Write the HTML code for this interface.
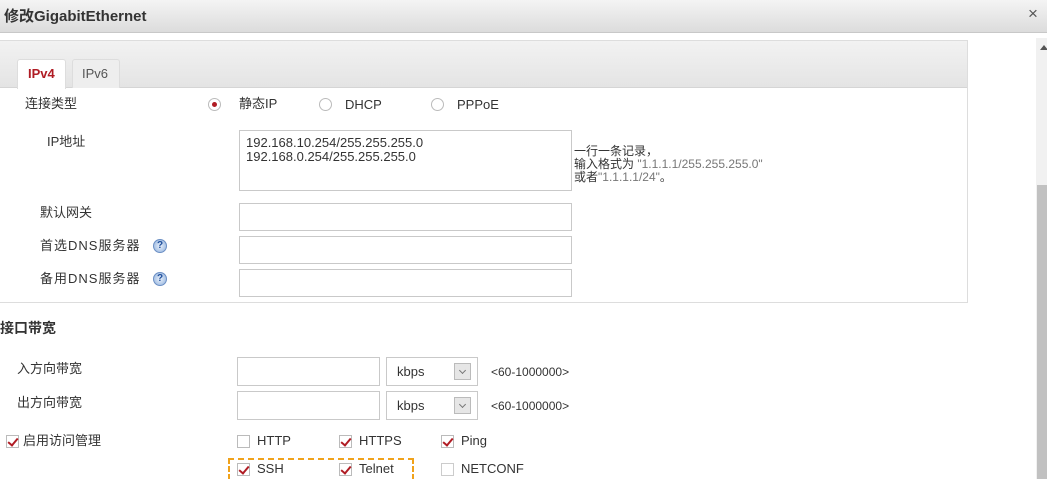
<!DOCTYPE html><html><head><meta charset="utf-8"><style>
*{margin:0;padding:0;box-sizing:border-box}
html,body{width:1047px;height:479px;overflow:hidden}
body{background:#fff;font-family:"Liberation Sans","Noto Sans CJK SC",sans-serif;font-size:13px;color:#333;position:relative;line-height:15px}
.a{position:absolute;white-space:nowrap}
.hdr{left:0;top:0;width:1047px;height:33px;background:linear-gradient(#f4f4f4,#dcdcdc);border-bottom:1px solid #c8c8c8}
.inp{position:absolute;border:1px solid #c9c9c9;background:#fff}
.cb{position:absolute;width:13px;height:13px;border:1px solid #bbb;background:#fff}
.cb.c::after{content:"";position:absolute;left:3px;top:0px;width:4px;height:8px;border:solid #b01c24;border-width:0 2px 2px 0;transform:rotate(40deg)}
.rd{position:absolute;width:13px;height:13px;border:1px solid #bbb;border-radius:50%;background:#fff}
.q{position:absolute;width:14px;height:14px;border-radius:50%;background:radial-gradient(#e8f0fb,#8fb0dc);border:1px solid #6b8fc4;color:#1f4f9c;font-size:10px;font-weight:bold;text-align:center;line-height:12px}
.sel{position:absolute;border:1px solid #c9c9c9;background:#fff}
.sel span{position:absolute;left:10px;top:6px}
.sel i{position:absolute;right:6px;top:5px;width:17px;height:17px;background:#e6e6e6;border:1px solid #bbb}
.sel i::after{content:"";position:absolute;left:5px;top:4px;width:4px;height:4px;border:solid #777;border-width:0 1px 1px 0;transform:rotate(45deg)}
</style></head><body>
<div class="a hdr"></div>
<div class="a" style="left:4px;top:8px;font-size:15px;font-weight:bold;color:#333;line-height:17px">修改GigabitEthernet</div>
<div class="a" style="left:1028px;top:6px;font-size:17px;color:#555">×</div>
<div class="a" style="left:1036px;top:38px;width:11px;height:441px;background:#f1f1f1"></div>
<div class="a" style="left:1037px;top:185px;width:10px;height:294px;background:#c1c1c1"></div>
<div class="a" style="left:1040px;top:45px;width:0;height:0;border-left:4px solid transparent;border-right:4px solid transparent;border-bottom:5px solid #555"></div>
<div class="a" style="left:0;top:40px;width:968px;height:263px;border:1px solid #ddd;border-left:none"></div>
<div class="a" style="left:0;top:41px;width:967px;height:47px;background:linear-gradient(#f2f2f2,#e4e4e4);border-bottom:1px solid #d5d5d5"></div>
<div class="a" style="left:17px;top:59px;width:49px;height:30px;background:#fff;border:1px solid #ddd;border-bottom:none;border-radius:3px 3px 0 0"></div>
<div class="a" style="left:28px;top:66px;color:#b01c24;font-weight:bold">IPv4</div>
<div class="a" style="left:72px;top:59px;width:48px;height:29px;background:#eee;border:1px solid #ddd;border-bottom:none;border-radius:3px 3px 0 0"></div>
<div class="a" style="left:82px;top:66px;color:#555">IPv6</div>
<div class="a" style="left:25px;top:96px">连接类型</div>
<div class="rd" style="left:208px;top:98px"></div><div class="a" style="left:212px;top:102px;width:5px;height:5px;border-radius:50%;background:#b01c24"></div>
<div class="a" style="left:239px;top:96px">静态IP</div>
<div class="rd" style="left:319px;top:98px"></div><div class="a" style="left:345px;top:97px">DHCP</div>
<div class="rd" style="left:431px;top:98px"></div><div class="a" style="left:457px;top:97px">PPPoE</div>
<div class="a" style="left:47px;top:134px">IP地址</div>
<div class="inp" style="left:239px;top:130px;width:333px;height:61px"></div>
<div class="a" style="left:246px;top:136px;line-height:14px">192.168.10.254/255.255.255.0<br>192.168.0.254/255.255.255.0</div>
<div class="a" style="left:574px;top:145px;line-height:13px;font-size:12px">一行一条记录，<br>输入格式为 <span style="color:#777">"1.1.1.1/255.255.255.0"</span><br>或者<span style="color:#777">"1.1.1.1/24"</span>。</div>
<div class="a" style="left:40px;top:205px">默认网关</div>
<div class="inp" style="left:239px;top:203px;width:333px;height:28px"></div>
<div class="a" style="left:40px;top:238px;letter-spacing:1px">首选DNS服务器</div><div class="q" style="left:153px;top:239px">?</div>
<div class="inp" style="left:239px;top:236px;width:333px;height:28px"></div>
<div class="a" style="left:40px;top:271px;letter-spacing:1px">备用DNS服务器</div><div class="q" style="left:153px;top:272px">?</div>
<div class="inp" style="left:239px;top:269px;width:333px;height:28px"></div>
<div class="a" style="left:0;top:321px;font-weight:bold;font-size:14px">接口带宽</div>
<div class="a" style="left:17px;top:361px">入方向带宽</div>
<div class="inp" style="left:237px;top:357px;width:143px;height:29px"></div>
<div class="sel" style="left:386px;top:357px;width:92px;height:29px"><span>kbps</span><i></i></div>
<div class="a" style="left:491px;top:365px;font-size:12px">&lt;60-1000000&gt;</div>
<div class="a" style="left:17px;top:395px">出方向带宽</div>
<div class="inp" style="left:237px;top:391px;width:143px;height:29px"></div>
<div class="sel" style="left:386px;top:391px;width:92px;height:29px"><span>kbps</span><i></i></div>
<div class="a" style="left:491px;top:399px;font-size:12px">&lt;60-1000000&gt;</div>
<div class="cb c" style="left:6px;top:435px"></div><div class="a" style="left:23px;top:433px">启用访问管理</div>
<div class="cb" style="left:237px;top:435px"></div><div class="a" style="left:257px;top:433px">HTTP</div>
<div class="cb c" style="left:339px;top:435px"></div><div class="a" style="left:359px;top:433px">HTTPS</div>
<div class="cb c" style="left:441px;top:435px"></div><div class="a" style="left:461px;top:433px">Ping</div>
<div class="a" style="left:228px;top:458px;width:186px;height:30px;border:2px dashed #f0a21b"></div>
<div class="cb c" style="left:237px;top:463px"></div><div class="a" style="left:257px;top:461px">SSH</div>
<div class="cb c" style="left:339px;top:463px"></div><div class="a" style="left:359px;top:461px">Telnet</div>
<div class="cb" style="left:441px;top:463px;border-color:#ccc"></div><div class="a" style="left:461px;top:461px">NETCONF</div>
</body></html>
